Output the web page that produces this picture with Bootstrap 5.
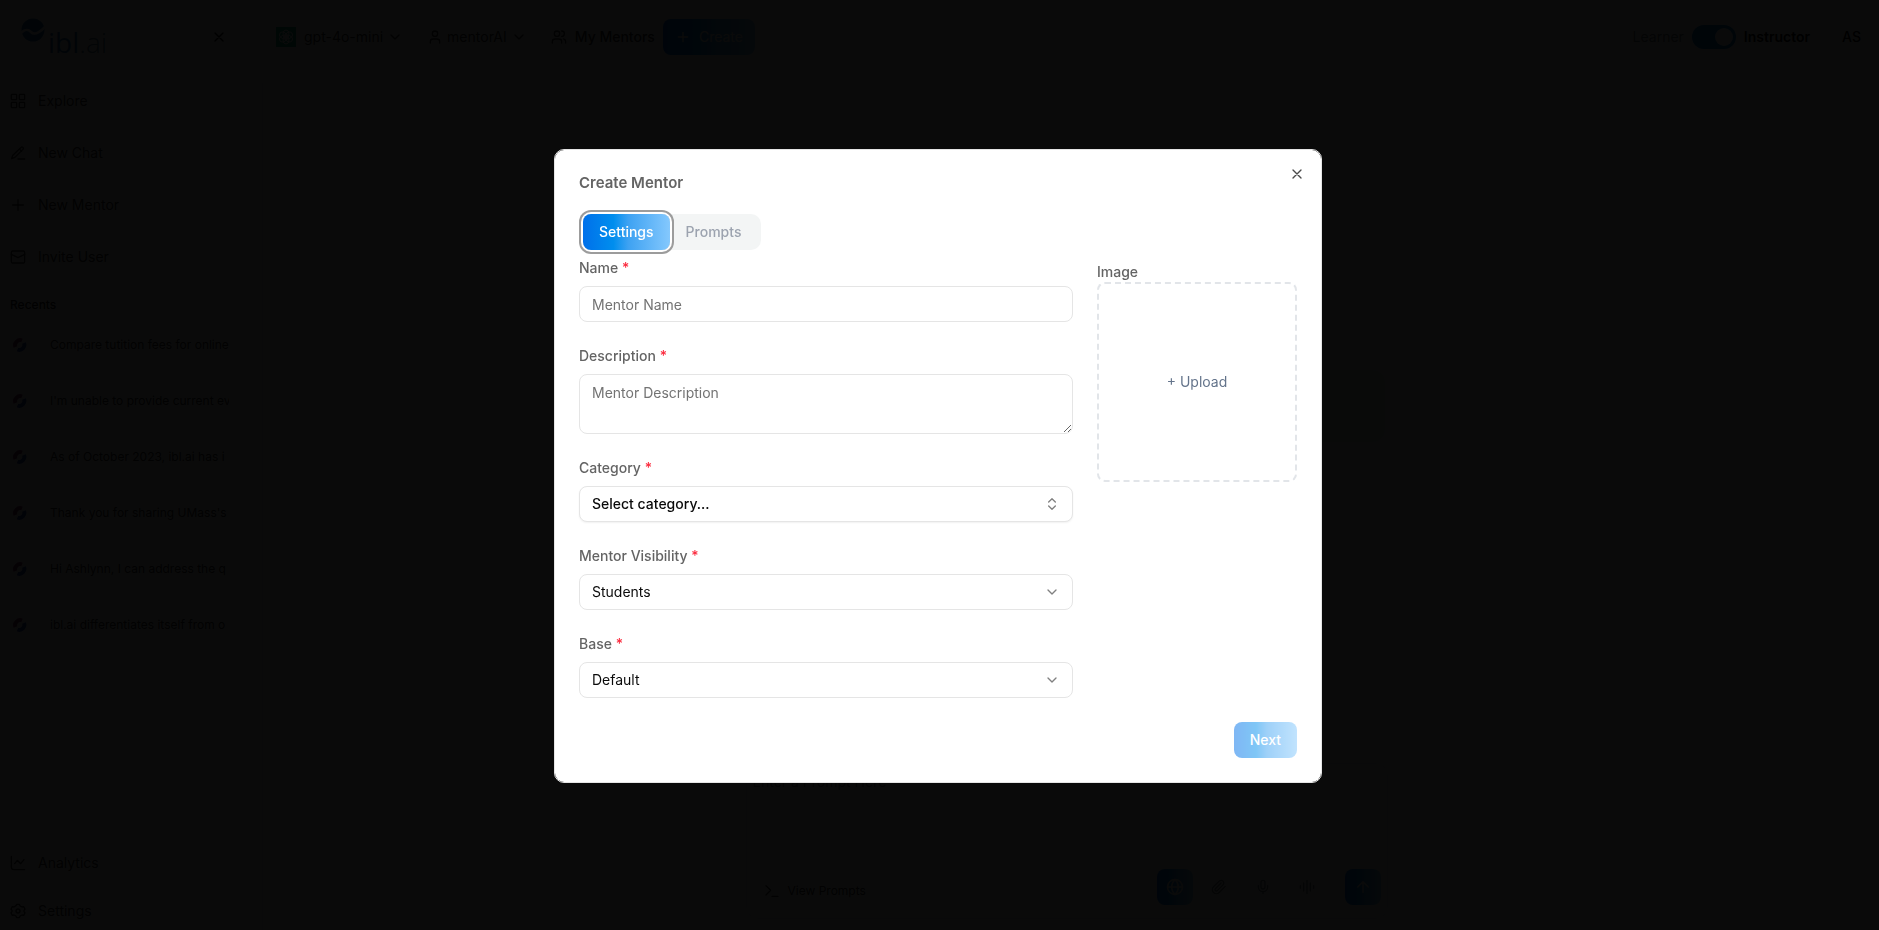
<!DOCTYPE html>
<html lang="en">
<head>
<meta charset="utf-8">
<meta name="viewport" content="width=device-width, initial-scale=1">
<title>Create Mentor</title>
<link href="https://cdn.jsdelivr.net/npm/bootstrap@5.3.0/dist/css/bootstrap.min.css" rel="stylesheet">
<style>
  body { font-family: Inter, "Liberation Sans", sans-serif; font-size: 14px; line-height: 20px; color: #333; background: #fff; }
  svg { flex: none; display: block; }
  .ico { fill: none; stroke: currentColor; stroke-width: 2; stroke-linecap: round; stroke-linejoin: round; }
  .plain { border: 0; background: none; padding: 0; color: inherit; }
  .blue-grad { background: linear-gradient(90deg, #0070ea 0%, #008eee 35%, #3ea2f2 52%, #84c8fd 100%); color: #fff; border: 0; border-radius: 8px; }

  /* app shell */
  .side { width: 263px; flex: none; }
  .side-head { height: 74px; padding: 0 36px 0 20px; }
  .side-body { margin-top: 9px; padding: 0 10px; border-right: 1px solid #e5e7eb; }
  .side-link { height: 36px; margin-bottom: 16px; gap: 12px; color: #333; text-decoration: none; }
  .side-foot { margin-bottom: -19px; }
  .side-foot .side-link { height: 20px; margin-bottom: 28px; }
  .recents-title { font-size: 12px; font-weight: 500; margin: 4px 0 2px; color: #222; }
  .recent { height: 56px; width: 219px; padding-left: 3px; gap: 23px; font-size: 12px; color: #333; text-decoration: none; white-space: nowrap; overflow: hidden; }
  .recent span { overflow: hidden; }
  .top { height: 74px; padding: 0 18px 0 13px; }
  .create { height: 36px; padding: 0 12px; }
  .role-switch.form-check-input { width: 44px; height: 24px; margin: 0; background-color: #0078d0; border: 0; }
  .initials { margin-left: 32px; }
  .stage { padding-right: 9px; }
  .hint { width: 636px; height: 72px; margin: 296px auto 0; border-radius: 12px; background: #d8f5e8; }
  .chat-box { width: 642px; margin: 0 auto 11px; padding: 8px 6px 13px; border: 1px solid #e5e7eb; border-radius: 12px; }
  .prompt { height: 97px; resize: none; border: 0; padding: 0; background: none; }
  .prompt::placeholder { color: #777; }
  .view-prompts { font-size: 12px; margin-left: 11px; }
  .sq { width: 36px; height: 36px; display: grid; place-items: center; }
  .wave { margin-right: 20px; }

  /* dialog */
  .modal-backdrop { --bs-backdrop-opacity: .96; }
  .modal { padding-right: 3px; }
  .modal-dialog { --bs-modal-width: 768px; padding-top: 2px; }
  .modal-content { border: 1px solid #e5e5e5; border-radius: 10px; padding: 24px; color: #646464; }
  .modal-title { font-size: 15px; line-height: 18px; font-weight: 600; margin-bottom: 22px; color: #646464; }
  .close-x { position: absolute; top: 16px; right: 16px; color: #4a4a4a; }
  .tabs { background: #f3f5f5; border-radius: 10px; padding-left: 4px; }
  .tabs button { height: 36px; font-weight: 500; padding: 0 16px; border: 0; }
  .tabs .on { box-shadow: 0 0 0 2px #fff, 0 0 0 4px #9c9c9c; }
  .tabs .off { background: none; color: #9ca3af; padding-right: 20px; }
  .lab { font-weight: 500; line-height: 20px; margin: 0 0 8px; color: #646464; display: block; }
  .lab i { color: #fb2c3f; font-style: normal; }
  .field { margin-bottom: 24px; }
  .modal .form-control, .modal .form-select { font-size: 14px; line-height: 20px; padding: 7px 12px; border: 1px solid #e5e5e5; border-radius: 8px; height: 36px; color: #0a0a0a; }
  .modal textarea.form-control { height: 60px; padding-top: 8px; }
  .modal .form-control::placeholder { color: #737373; }
  .modal .form-select { background-size: 16px; background-position: right 12px center; background-image: url("data:image/svg+xml,%3Csvg xmlns='http://www.w3.org/2000/svg' viewBox='0 0 24 24' fill='none' stroke='%23808080' stroke-width='2' stroke-linecap='round' stroke-linejoin='round'%3E%3Cpath d='m6 9 6 6 6-6'/%3E%3C/svg%3E"); }
  .modal .form-select.updown { font-weight: 500; box-shadow: 0 1px 2px rgba(0,0,0,.06); background-image: url("data:image/svg+xml,%3Csvg xmlns='http://www.w3.org/2000/svg' viewBox='0 0 24 24' fill='none' stroke='%23808080' stroke-width='2' stroke-linecap='round' stroke-linejoin='round'%3E%3Cpath d='m7 15 5 5 5-5M7 9l5-5 5 5'/%3E%3C/svg%3E"); }
  .image-col { width: 200px; flex: none; padding-top: 4px; }
  .drop { width: 100%; aspect-ratio: 1; border: 2px dashed #e2e5e9; border-radius: 8px; background: none; color: #64748b; }
  .next { height: 36px; padding: 0 16px; font-weight: 500; opacity: .5; }
</style>
</head>
<body class="modal-open overflow-hidden">
<div class="d-flex vh-100">
  <aside class="side d-flex flex-column">
    <div class="side-head d-flex align-items-center justify-content-between">
      <svg width="100" height="48" viewBox="0 -4 100 48" role="img" aria-label="ibl.ai">
        <circle cx="13" cy="13" r="11.500" fill="#1b6fb5"/>
        <path d="M1 16c4-4 7-4 10-1s7 2 14-5" fill="none" stroke="#fff" stroke-width="2.500"/>
        <text x="28" y="36" font-size="28" font-family="Open Sans, sans-serif" fill="#1b6fb5">ibl<tspan fill="#4c7891" font-weight="300">.ai</tspan></text>
      </svg>
      <button class="plain text-black" aria-label="Close sidebar"><svg class="ico" width="16" height="16" viewBox="0 0 24 24"><path d="M18 6 6 18M6 6l12 12"/></svg></button>
    </div>
    <div class="side-body d-flex flex-column flex-grow-1">
      <nav>
        <a class="side-link d-flex align-items-center" href="#"><svg class="ico" width="16" height="16" viewBox="0 0 24 24"><rect x="2" y="2" width="8" height="8" rx="1"/><rect x="14" y="2" width="8" height="8" rx="1"/><rect x="14" y="14" width="8" height="8" rx="1"/><rect x="2" y="14" width="8" height="8" rx="1"/></svg>Explore</a>
        <a class="side-link d-flex align-items-center" href="#"><svg class="ico" width="16" height="16" viewBox="0 0 24 24"><path d="M12 21h10M16.400 3.600a2 2 0 0 1 3 3L7.400 18.600l-5 2 1.500-5zM14 6l3.500 3.500"/></svg>New Chat</a>
        <a class="side-link d-flex align-items-center" href="#"><svg class="ico" width="16" height="16" viewBox="0 0 24 24"><path d="M4 12h16M12 4v16"/></svg>New Mentor</a>
        <a class="side-link d-flex align-items-center" href="#"><svg class="ico" width="16" height="16" viewBox="0 0 24 24"><rect x="2" y="3" width="20" height="18" rx="2"/><path d="m2 8 10 5 10-5"/></svg>Invite User</a>
      </nav>
      <div class="recents-title">Recents</div>
      <div id="recents"></div>
      <nav class="side-foot mt-auto">
        <a class="side-link d-flex align-items-center" href="#"><svg class="ico" width="16" height="16" viewBox="0 0 24 24"><path d="M2 2v16a4 4 0 0 0 4 4h16M7 13l4-5 5 5 5-6"/></svg>Analytics</a>
        <a class="side-link d-flex align-items-center" href="#"><svg class="ico" width="16" height="16" viewBox="0 0 24 24"><path d="m9 4 1-2h4l1 2.500 3 1.500 2.500-.5 2 3.500-1.500 2v2l1.500 2-2 3.500-2.500-.5-3 1.500-1 2.500h-4l-1-2.500L6 18l-2.500.5-2-3.500L3 13v-2L1.500 9l2-3.500L6 6z"/><circle cx="12" cy="12" r="3"/></svg>Settings</a>
      </nav>
    </div>
  </aside>
  <div class="d-flex flex-column flex-grow-1">
    <header class="top d-flex align-items-center">
      <button class="plain d-flex align-items-center me-4">
        <svg width="20" height="20" viewBox="0 0 20 20" class="me-2"><rect width="20" height="20" fill="#10a37f"/><g fill="none" stroke="#fff"><ellipse cx="10" cy="7" rx="3" ry="4"/><ellipse cx="10" cy="7" rx="3" ry="4" transform="rotate(60 10 10)"/><ellipse cx="10" cy="7" rx="3" ry="4" transform="rotate(120 10 10)"/><ellipse cx="10" cy="7" rx="3" ry="4" transform="rotate(180 10 10)"/><ellipse cx="10" cy="7" rx="3" ry="4" transform="rotate(240 10 10)"/><ellipse cx="10" cy="7" rx="3" ry="4" transform="rotate(300 10 10)"/></g></svg>gpt-4o-mini
        <svg class="ico ms-1" width="16" height="16" viewBox="0 0 24 24"><path d="m6 9 6 6 6-6"/></svg></button>
      <button class="plain d-flex align-items-center me-4"><svg class="ico me-1" width="16" height="16" viewBox="0 0 24 24"><path d="M19 21v-2a4 4 0 0 0-4-4H9a4 4 0 0 0-4 4v2"/><circle cx="12" cy="7" r="4"/></svg>mentorAI
        <svg class="ico ms-1" width="16" height="16" viewBox="0 0 24 24"><path d="m6 9 6 6 6-6"/></svg></button>
      <button class="plain d-flex align-items-center me-2 fw-medium"><svg class="ico me-2" width="16" height="16" viewBox="0 0 24 24"><path d="M16 21v-2a4 4 0 0 0-4-4H6a4 4 0 0 0-4 4v2M22 21v-2a4 4 0 0 0-3-4M16 3a4 4 0 0 1 0 8"/><circle cx="9" cy="7" r="4"/></svg>My Mentors</button>
      <button class="blue-grad create d-flex align-items-center"><svg class="ico me-2" width="16" height="16" viewBox="0 0 24 24"><path d="M5 12h14M12 5v14"/></svg>Create</button>
      <div class="ms-auto d-flex align-items-center">
        <span class="text-secondary me-2">Learner</span>
        <span class="form-switch p-0 d-flex"><input class="form-check-input role-switch" type="checkbox" role="switch" id="role" checked></span>
        <label class="ms-2 text-black fw-semibold" for="role">Instructor</label>
        <button class="plain initials text-black fw-medium">AS</button>
      </div>
    </header>
    <main class="stage d-flex flex-column flex-grow-1 justify-content-between">
      <div class="hint"></div>
      <div class="chat-box">
        <textarea class="prompt d-block w-100" aria-label="Prompt" placeholder="Enter a Prompt Here"></textarea>
        <div class="d-flex align-items-center">
          <button class="plain view-prompts d-flex align-items-center mt-2 me-auto"><svg class="ico me-2" width="16" height="16" viewBox="0 0 24 24"><path d="m3 18 7-7-7-7M12 20h9"/></svg>View Prompts</button>
          <button class="blue-grad sq" aria-label="Web search"><svg class="ico" width="18" height="18" viewBox="0 0 24 24"><circle cx="12" cy="12" r="10"/><path d="M2 12h20M12 2c-6 6-6 14 0 20 6-6 6-14 0-20"/></svg></button>
          <button class="plain sq ms-2 text-secondary" aria-label="Attach"><svg class="ico" width="16" height="16" viewBox="0 0 24 24"><path d="m21.440 11.050-9.190 9.190a6 6 0 0 1-8.490-8.490l8.570-8.570A4 4 0 1 1 18 8.840l-8.590 8.570a2 2 0 0 1-2.830-2.830l8.490-8.480"/></svg></button>
          <button class="plain sq ms-2 text-secondary" aria-label="Dictate"><svg class="ico" width="16" height="16" viewBox="0 0 24 24"><rect x="9" y="2" width="6" height="13" rx="3"/><path d="M19 10v2a7 7 0 0 1-14 0v-2M12 19v3"/></svg></button>
          <button class="plain sq ms-2 wave text-secondary" aria-label="Voice mode"><svg class="ico" width="16" height="16" viewBox="0 0 24 24"><path d="M2 10v4M7 6v12M12 2v20M17 6v12M22 10v4"/></svg></button>
          <button class="blue-grad sq" aria-label="Send"><svg class="ico" width="18" height="18" viewBox="0 0 24 24"><path d="m5 12 7-7 7 7M12 19V5"/></svg></button>
        </div>
      </div>
    </main>
  </div>
</div>

<div class="modal-backdrop show"></div>
<div class="modal d-block overflow-hidden" tabindex="-1" role="dialog" aria-modal="true" aria-labelledby="dlgTitle">
  <div class="modal-dialog modal-dialog-centered my-0 min-vh-100">
    <form class="modal-content">
      <button type="button" class="plain close-x" aria-label="Close"><svg class="ico" width="16" height="16" viewBox="0 0 24 24"><path d="M18 6 6 18M6 6l12 12"/></svg></button>
      <h2 class="modal-title" id="dlgTitle">Create Mentor</h2>
      <div class="tabs d-inline-flex align-self-start mb-2" role="tablist">
        <button type="button" class="blue-grad on" role="tab" aria-selected="true">Settings</button>
        <button type="button" class="off" role="tab" aria-selected="false">Prompts</button>
      </div>
      <div class="d-flex gap-4">
        <div class="flex-grow-1">
          <div class="field"><label class="lab" for="name">Name <i>*</i></label><input class="form-control" id="name" placeholder="Mentor Name"></div>
          <div class="field"><label class="lab" for="desc">Description <i>*</i></label><textarea class="form-control" id="desc" placeholder="Mentor Description"></textarea></div>
          <div class="field"><label class="lab" for="cat">Category <i>*</i></label><select class="form-select updown" id="cat"><option>Select category...</option></select></div>
          <div class="field"><label class="lab" for="vis">Mentor Visibility <i>*</i></label><select class="form-select" id="vis"><option>Students</option></select></div>
          <div class="field"><label class="lab" for="base">Base <i>*</i></label><select class="form-select" id="base"><option>Default</option></select></div>
        </div>
        <div class="image-col"><label class="lab mb-0" for="upload">Image</label><button type="button" class="drop" id="upload">+ Upload</button></div>
      </div>
      <button type="submit" class="next blue-grad align-self-end">Next</button>
    </form>
  </div>
</div>
<script src="https://cdn.jsdelivr.net/npm/bootstrap@5.3.0/dist/js/bootstrap.bundle.min.js"></script>
<script>
  const chats = ["Compare tutition fees for online", "I'm unable to provide current ev", "As of October 2023, ibl.ai has i", "Thank you for sharing UMass's", "Hi Ashlynn, I can address the q", "ibl.ai differentiates itself from o"];
  document.getElementById("recents").innerHTML = chats.map(t => `<a href="#" class="recent d-flex align-items-center"><svg width="14" height="14" viewBox="0 0 14 14" fill="none" stroke-width="4"><path d="M2.500 9A5 5 0 0 1 9 2.500" stroke="#8a2f6b"/><path d="M11 5A5 5 0 0 1 4.500 11.500" stroke="#2447b8"/></svg><span>${t}</span></a>`).join("");
</script>
</body>
</html>
